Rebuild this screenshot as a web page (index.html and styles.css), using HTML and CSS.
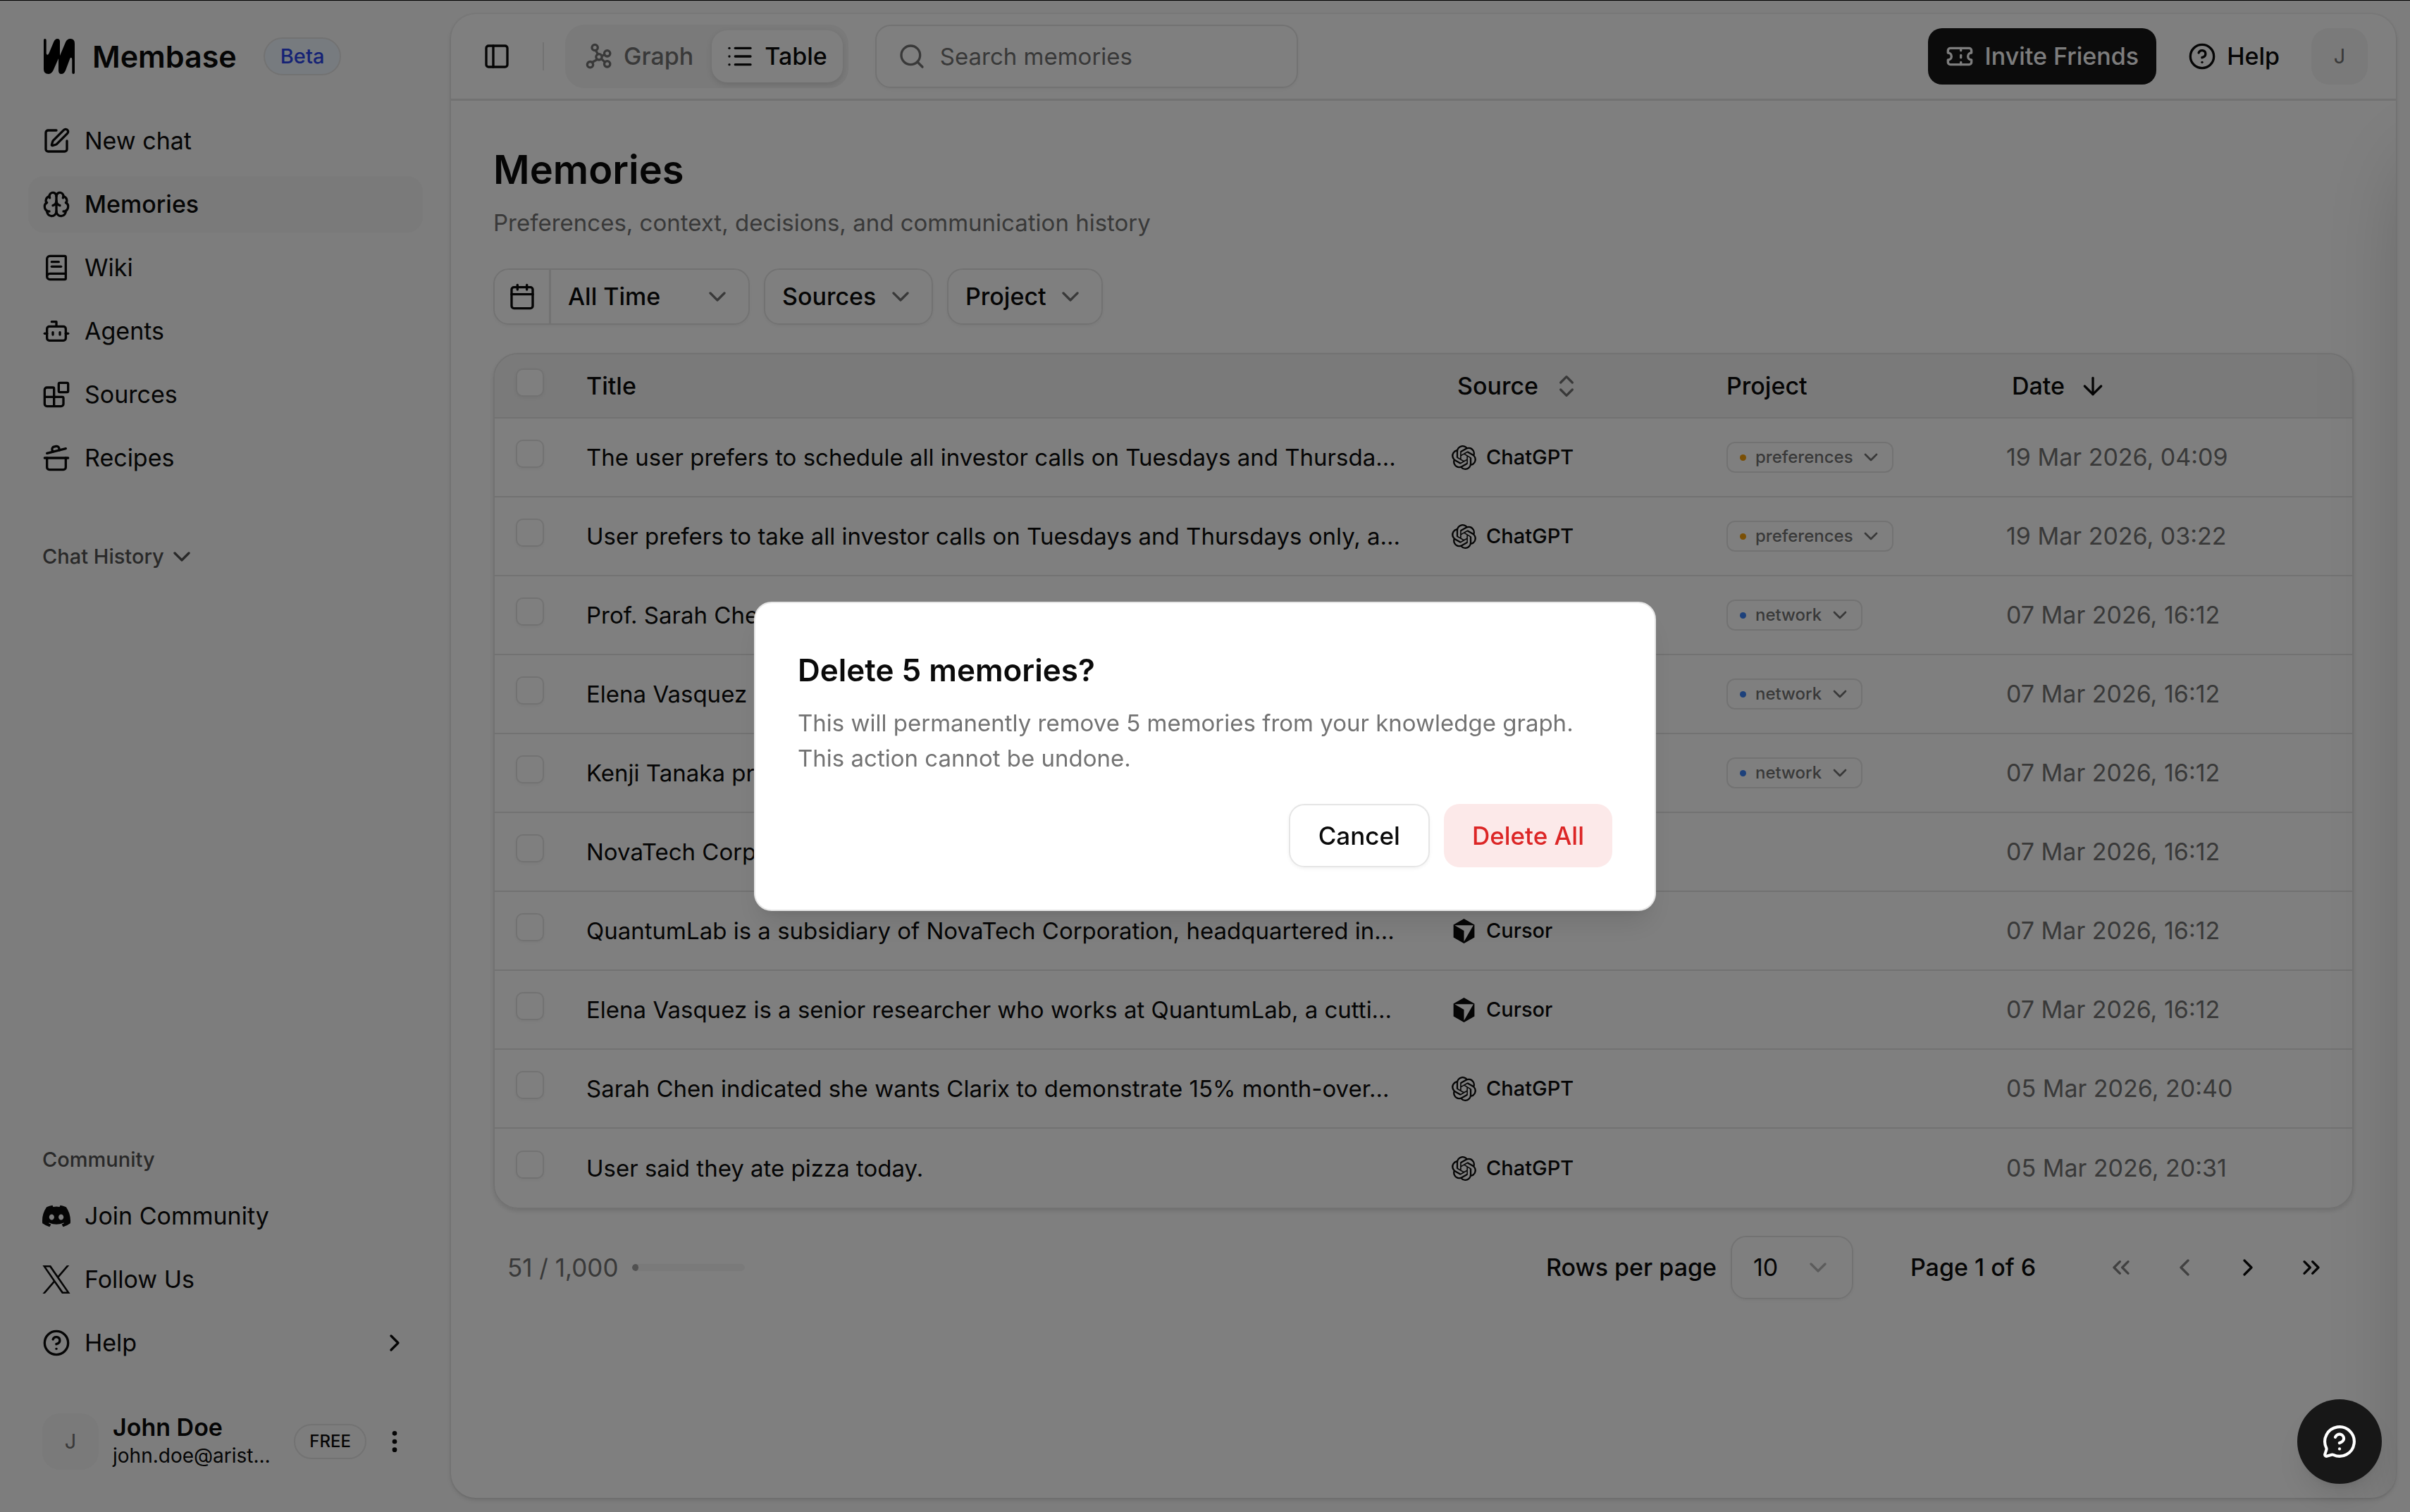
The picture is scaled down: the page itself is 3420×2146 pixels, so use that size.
FILE: index.html
```html
<!DOCTYPE html>
<html lang="en">
<head>
    <meta charset="UTF-8">
    <meta name="viewport" content="width=device-width, initial-scale=1.0">
    <title>Memories - Membase</title>
    <link rel="stylesheet" href="styles.css">
</head>
<body>
    <!-- icon set -->
    <svg class="sprite" aria-hidden="true">
        <symbol id="i-edit" viewBox="0 0 24 24"><path d="M12 3H5a2 2 0 0 0-2 2v14a2 2 0 0 0 2 2h14a2 2 0 0 0 2-2v-7"/><path d="M18.375 2.625a1 1 0 0 1 3 3l-9.013 9.014a2 2 0 0 1-.853.505l-2.873.84a.5.5 0 0 1-.62-.62l.84-2.873a2 2 0 0 1 .506-.852z"/></symbol>
        <symbol id="i-brain" viewBox="0 0 24 24"><path d="M12 18V5"/><path d="M15 13a4.17 4.17 0 0 1-3-4 4.17 4.17 0 0 1-3 4"/><path d="M17.598 6.5A3 3 0 1 0 12 5a3 3 0 1 0-5.598 1.5"/><path d="M17.997 5.125a4 4 0 0 1 2.526 5.77"/><path d="M18 18a4 4 0 0 0 2-7.464"/><path d="M19.967 17.483A4 4 0 1 1 12 18a4 4 0 1 1-7.967-.517"/><path d="M6 18a4 4 0 0 1-2-7.464"/><path d="M6.003 5.125a4 4 0 0 0-2.526 5.77"/></symbol>
        <symbol id="i-book" viewBox="0 0 24 24"><path d="M4 19.5v-15A2.5 2.5 0 0 1 6.5 2H19a1 1 0 0 1 1 1v18a1 1 0 0 1-1 1H6.5a1 1 0 0 1 0-5H20"/><path d="M8 11h8"/><path d="M8 7h6"/></symbol>
        <symbol id="i-bot" viewBox="0 0 24 24"><path d="M12 8V4H8"/><rect width="16" height="12" x="4" y="8" rx="2"/><path d="M2 14h2"/><path d="M20 14h2"/><path d="M15 13v2"/><path d="M9 13v2"/></symbol>
        <symbol id="i-blocks" viewBox="0 0 24 24"><path d="M10 22V7a1 1 0 0 0-1-1H4a2 2 0 0 0-2 2v12a2 2 0 0 0 2 2h12a2 2 0 0 0 2-2v-5a1 1 0 0 0-1-1H2"/><rect x="14" y="2" width="8" height="8" rx="1"/></symbol>
        <symbol id="i-pot" viewBox="0 0 24 24"><path d="M2 12h20"/><path d="M20 12v8a2 2 0 0 1-2 2H6a2 2 0 0 1-2-2v-8"/><path d="m4 8 16-4"/><path d="m8.86 6.78-.45-1.81a2 2 0 0 1 1.45-2.43l1.94-.48a2 2 0 0 1 2.43 1.46l.45 1.8"/></symbol>
        <symbol id="i-down" viewBox="0 0 24 24"><path d="m6 9 6 6 6-6"/></symbol>
        <symbol id="i-right" viewBox="0 0 24 24"><path d="m9 18 6-6-6-6"/></symbol>
        <symbol id="i-left" viewBox="0 0 24 24"><path d="m15 18-6-6 6-6"/></symbol>
        <symbol id="i-first" viewBox="0 0 24 24"><path d="m11 17-5-5 5-5"/><path d="m18 17-5-5 5-5"/></symbol>
        <symbol id="i-last" viewBox="0 0 24 24"><path d="m6 17 5-5-5-5"/><path d="m13 17 5-5-5-5"/></symbol>
        <symbol id="i-sort" viewBox="0 0 24 24"><path d="m7 15 5 5 5-5"/><path d="m7 9 5-5 5 5"/></symbol>
        <symbol id="i-arrow-down" viewBox="0 0 24 24"><path d="M12 5v14"/><path d="m19 12-7 7-7-7"/></symbol>
        <symbol id="i-help" viewBox="0 0 24 24"><circle cx="12" cy="12" r="10"/><path d="M9.09 9a3 3 0 0 1 5.83 1c0 2-3 3-3 3"/><path d="M12 17h.01"/></symbol>
        <symbol id="i-dots" viewBox="0 0 24 24"><circle cx="12" cy="12" r="1"/><circle cx="12" cy="5" r="1"/><circle cx="12" cy="19" r="1"/></symbol>
        <symbol id="i-panel" viewBox="0 0 24 24"><rect width="18" height="18" x="3" y="3" rx="2"/><path d="M9 3v18"/></symbol>
        <symbol id="i-graph" viewBox="0 0 24 24"><circle cx="8.5" cy="4.5" r="2.5"/><circle cx="19" cy="9.5" r="2.5"/><circle cx="12" cy="12.5" r="2.5"/><circle cx="4.5" cy="19" r="2.5"/><circle cx="19" cy="18.5" r="2.5"/><path d="m9.3 6.9 1.8 3.2M14.4 11.6l2.3-1M10.6 14.6l-4.5 2.5M14 14l3 2.9"/></symbol>
        <symbol id="i-list" viewBox="0 0 24 24"><path d="M3 5h.01"/><path d="M3 12h.01"/><path d="M3 19h.01"/><path d="M8 5h13"/><path d="M8 12h13"/><path d="M8 19h13"/></symbol>
        <symbol id="i-search" viewBox="0 0 24 24"><path d="m21 21-4.34-4.34"/><circle cx="11" cy="11" r="8"/></symbol>
        <symbol id="i-ticket" viewBox="0 0 24 24"><path d="M2 9a3 3 0 0 1 0 6v2a2 2 0 0 0 2 2h16a2 2 0 0 0 2-2v-2a3 3 0 0 1 0-6V7a2 2 0 0 0-2-2H4a2 2 0 0 0-2 2Z"/><path d="M13 5v2"/><path d="M13 17v2"/><path d="M13 11v2"/></symbol>
        <symbol id="i-calendar" viewBox="0 0 24 24"><path d="M8 2v4"/><path d="M16 2v4"/><rect width="18" height="18" x="3" y="4" rx="2"/><path d="M3 10h18"/></symbol>
        <symbol id="i-chat-help" viewBox="0 0 24 24"><path d="M2.992 16.342a2 2 0 0 1 .094 1.167l-1.065 3.29a1 1 0 0 0 1.236 1.168l3.413-.998a2 2 0 0 1 1.099.092 10 10 0 1 0-4.777-4.719"/><path d="M9.09 9a3 3 0 0 1 5.83 1c0 2-3 3-3 3"/><path d="M12 17h.01"/></symbol>
        <symbol id="i-discord" viewBox="0 0 24 24"><path d="M20.317 4.37a19.791 19.791 0 0 0-4.885-1.515.074.074 0 0 0-.079.037c-.21.375-.444.864-.608 1.25a18.27 18.27 0 0 0-5.487 0 12.64 12.64 0 0 0-.617-1.25.077.077 0 0 0-.079-.037A19.736 19.736 0 0 0 3.677 4.37a.07.07 0 0 0-.032.027C.533 9.046-.32 13.58.099 18.057a.082.082 0 0 0 .031.057 19.9 19.9 0 0 0 5.993 3.03.078.078 0 0 0 .084-.028 14.09 14.09 0 0 0 1.226-1.994.076.076 0 0 0-.041-.106 13.107 13.107 0 0 1-1.872-.892.077.077 0 0 1-.008-.128 10.2 10.2 0 0 0 .372-.292.074.074 0 0 1 .077-.01c3.928 1.793 8.18 1.793 12.062 0a.074.074 0 0 1 .078.01c.12.098.246.198.373.292a.077.077 0 0 1-.006.127 12.299 12.299 0 0 1-1.873.892.077.077 0 0 0-.041.107c.36.698.772 1.362 1.225 1.993a.076.076 0 0 0 .084.028 19.839 19.839 0 0 0 6.002-3.03.077.077 0 0 0 .032-.054c.5-5.177-.838-9.674-3.549-13.66a.061.061 0 0 0-.031-.03zM8.02 15.33c-1.183 0-2.157-1.085-2.157-2.419 0-1.333.956-2.419 2.157-2.419 1.21 0 2.176 1.096 2.157 2.42 0 1.333-.956 2.418-2.157 2.418zm7.975 0c-1.183 0-2.157-1.085-2.157-2.419 0-1.333.955-2.419 2.157-2.419 1.21 0 2.176 1.096 2.157 2.42 0 1.333-.946 2.418-2.157 2.418z"/></symbol>
        <symbol id="i-x" viewBox="0 0 24 24"><path d="M14.234 10.162 22.977 0h-2.072l-7.591 8.824L7.251 0H.258l9.168 13.343L.258 24H2.33l8.016-9.318L16.749 24h6.993zm-2.837 3.299-.929-1.329L3.076 1.56h3.182l5.965 8.532.929 1.329 7.754 11.09h-3.182z"/></symbol>
        <symbol id="i-openai" viewBox="0 0 24 24"><path d="M22.2819 9.8211a5.9847 5.9847 0 0 0-.5157-4.9108 6.0462 6.0462 0 0 0-6.5098-2.9A6.0651 6.0651 0 0 0 4.9807 4.1818a5.9847 5.9847 0 0 0-3.9977 2.9 6.0462 6.0462 0 0 0 .7427 7.0966 5.98 5.98 0 0 0 .511 4.9107 6.051 6.051 0 0 0 6.5146 2.9001A5.9847 5.9847 0 0 0 13.2599 24a6.0557 6.0557 0 0 0 5.7718-4.2058 5.9894 5.9894 0 0 0 3.9977-2.9001 6.0557 6.0557 0 0 0-.7475-7.0729zm-9.022 12.6081a4.4755 4.4755 0 0 1-2.8764-1.0408l.1419-.0804 4.7783-2.7582a.7948.7948 0 0 0 .3927-.6813v-6.7369l2.02 1.1686a.071.071 0 0 1 .038.052v5.5826a4.504 4.504 0 0 1-4.4945 4.4944zm-9.6607-4.1254a4.4708 4.4708 0 0 1-.5346-3.0137l.142.0852 4.783 2.7582a.7712.7712 0 0 0 .7806 0l5.8428-3.3685v2.3324a.0804.0804 0 0 1-.0332.0615L9.74 19.9502a4.4992 4.4992 0 0 1-6.1408-1.6464zM2.3408 7.8956a4.485 4.485 0 0 1 2.3655-1.9728V11.6a.7664.7664 0 0 0 .3879.6765l5.8144 3.3543-2.0201 1.1685a.0757.0757 0 0 1-.071 0l-4.8303-2.7865A4.504 4.504 0 0 1 2.3408 7.872zm16.5963 3.8558L13.1038 8.364 15.1192 7.2a.0757.0757 0 0 1 .071 0l4.8303 2.7913a4.4944 4.4944 0 0 1-.6765 8.1042v-5.6772a.79.79 0 0 0-.407-.667zm2.0107-3.0231l-.142-.0852-4.7735-2.7818a.7759.7759 0 0 0-.7854 0L9.409 9.2297V6.8974a.0662.0662 0 0 1 .0284-.0615l4.8303-2.7866a4.4992 4.4992 0 0 1 6.6802 4.66zM8.3065 12.863l-2.02-1.1638a.0804.0804 0 0 1-.038-.0567V6.0742a4.4992 4.4992 0 0 1 7.3757-3.4537l-.142.0805L8.704 5.459a.7948.7948 0 0 0-.3927.6813zm1.0976-2.3654l2.602-1.4998 2.6069 1.4998v2.9994l-2.5974 1.4997-2.6067-1.4997Z"/></symbol>
        <symbol id="i-cursor" viewBox="0 0 24 24"><path d="M12 0 22.2 5.9v12.2L12 24 1.8 18.1V5.9zM2.9 6.3 12 11.6V22.2L21.2 6.3z"/></symbol>
    </svg>

    <div class="app">
        <aside class="sidebar">
            <div class="brand">
                <svg class="logo" viewBox="0 0 44 50"><path d="M0 2Q0 0 1.8 0 3.7 0 3.7 2V20C3.8 23.5 6 23.5 7.3 21L14 5Q16 0 19.5 0 23 0 23 4V24L31 5Q33.200 0 38 0 44 0 44 7V48Q44 50 42.200 50 40.300 50 40.300 48V30C40.300 26 38 26 37 29L31 45Q29 50 25 50 21 50 21 45V28L13.500 45Q11 50 6.500 50 0 50 0 43Z"/></svg>
                <span class="brand-name">Membase</span>
                <span class="beta">Beta</span>
            </div>
            <nav class="nav">
                <a href="#"><svg class="icon"><use href="#i-edit"/></svg>New chat</a>
                <a href="#" class="active"><svg class="icon"><use href="#i-brain"/></svg>Memories</a>
                <a href="#"><svg class="icon"><use href="#i-book"/></svg>Wiki</a>
                <a href="#"><svg class="icon"><use href="#i-bot"/></svg>Agents</a>
                <a href="#"><svg class="icon"><use href="#i-blocks"/></svg>Sources</a>
                <a href="#"><svg class="icon"><use href="#i-pot"/></svg>Recipes</a>
            </nav>
            <button class="group-label history">Chat History<svg class="icon"><use href="#i-down"/></svg></button>

            <div class="sidebar-bottom">
                <div class="group-label">Community</div>
                <nav class="nav">
                    <a href="#"><svg class="icon solid"><use href="#i-discord"/></svg>Join Community</a>
                    <a href="#"><svg class="icon solid"><use href="#i-x"/></svg>Follow Us</a>
                    <a href="#"><svg class="icon"><use href="#i-help"/></svg>Help<svg class="icon push"><use href="#i-right"/></svg></a>
                </nav>
                <div class="user">
                    <span class="avatar">J</span>
                    <div class="user-info">
                        <div class="user-name">John Doe</div>
                        <div class="user-mail">john.doe@arist…</div>
                    </div>
                    <span class="plan">FREE</span>
                    <button class="plain" aria-label="Account menu"><svg class="icon"><use href="#i-dots"/></svg></button>
                </div>
            </div>
        </aside>

        <main class="panel">
            <header class="topbar">
                <button class="plain" aria-label="Toggle sidebar"><svg class="icon"><use href="#i-panel"/></svg></button>
                <span class="separator"></span>
                <div class="segmented">
                    <button><svg class="icon"><use href="#i-graph"/></svg>Graph</button>
                    <button class="active"><svg class="icon"><use href="#i-list"/></svg>Table</button>
                </div>
                <label class="search">
                    <svg class="icon"><use href="#i-search"/></svg>
                    <input type="search" placeholder="Search memories" aria-label="Search memories">
                </label>
                <div class="topbar-right">
                    <button class="invite"><svg class="icon"><use href="#i-ticket"/></svg>Invite Friends</button>
                    <button class="help"><svg class="icon"><use href="#i-help"/></svg>Help</button>
                    <span class="avatar">J</span>
                </div>
            </header>

            <div class="content">
                <h1>Memories</h1>
                <p class="subtitle">Preferences, context, decisions, and communication history</p>

                <div class="filters">
                    <div class="range">
                        <button class="range-button" aria-label="Pick dates"><svg class="icon"><use href="#i-calendar"/></svg></button>
                        <span class="select range-select">
                            <select aria-label="Time range"><option>All Time</option></select>
                            <svg class="icon"><use href="#i-down"/></svg>
                        </span>
                    </div>
                    <span class="select boxed">
                        <select aria-label="Sources"><option>Sources</option></select>
                        <svg class="icon"><use href="#i-down"/></svg>
                    </span>
                    <span class="select boxed">
                        <select aria-label="Project"><option>Project</option></select>
                        <svg class="icon"><use href="#i-down"/></svg>
                    </span>
                </div>

                <div class="table-wrap">
                    <table>
                        <colgroup>
                            <col class="col-check">
                            <col>
                            <col class="col-source">
                            <col class="col-project">
                            <col class="col-date">
                        </colgroup>
                        <thead>
                            <tr>
                                <th class="check"><input type="checkbox" aria-label="Select all"></th>
                                <th>Title</th>
                                <th><button class="sort">Source<svg class="icon muted"><use href="#i-sort"/></svg></button></th>
                                <th>Project</th>
                                <th><button class="sort">Date<svg class="icon"><use href="#i-arrow-down"/></svg></button></th>
                            </tr>
                        </thead>
                        <tbody>
                            <tr>
                                <td class="check"><input type="checkbox" aria-label="Select memory"></td>
                                <td class="title">The user prefers to schedule all investor calls on Tuesdays and Thursda…</td>
                                <td><span class="source"><svg class="icon solid"><use href="#i-openai"/></svg>ChatGPT</span></td>
                                <td><span class="select tag amber"><select aria-label="Memory project"><option>preferences</option></select><svg class="icon"><use href="#i-down"/></svg></span></td>
                                <td class="date">19 Mar 2026, 04:09</td>
                            </tr>
                            <tr>
                                <td class="check"><input type="checkbox" aria-label="Select memory"></td>
                                <td class="title">User prefers to take all investor calls on Tuesdays and Thursdays only, a…</td>
                                <td><span class="source"><svg class="icon solid"><use href="#i-openai"/></svg>ChatGPT</span></td>
                                <td><span class="select tag amber"><select aria-label="Memory project"><option>preferences</option></select><svg class="icon"><use href="#i-down"/></svg></span></td>
                                <td class="date">19 Mar 2026, 03:22</td>
                            </tr>
                            <tr>
                                <td class="check"><input type="checkbox" aria-label="Select memory"></td>
                                <td class="title">Prof. Sarah Chen</td>
                                <td></td>
                                <td><span class="select tag blue"><select aria-label="Memory project"><option>network</option></select><svg class="icon"><use href="#i-down"/></svg></span></td>
                                <td class="date">07 Mar 2026, 16:12</td>
                            </tr>
                            <tr>
                                <td class="check"><input type="checkbox" aria-label="Select memory"></td>
                                <td class="title">Elena Vasquez</td>
                                <td></td>
                                <td><span class="select tag blue"><select aria-label="Memory project"><option>network</option></select><svg class="icon"><use href="#i-down"/></svg></span></td>
                                <td class="date">07 Mar 2026, 16:12</td>
                            </tr>
                            <tr>
                                <td class="check"><input type="checkbox" aria-label="Select memory"></td>
                                <td class="title">Kenji Tanaka prefers</td>
                                <td></td>
                                <td><span class="select tag blue"><select aria-label="Memory project"><option>network</option></select><svg class="icon"><use href="#i-down"/></svg></span></td>
                                <td class="date">07 Mar 2026, 16:12</td>
                            </tr>
                            <tr>
                                <td class="check"><input type="checkbox" aria-label="Select memory"></td>
                                <td class="title">NovaTech Corporation</td>
                                <td></td>
                                <td></td>
                                <td class="date">07 Mar 2026, 16:12</td>
                            </tr>
                            <tr>
                                <td class="check"><input type="checkbox" aria-label="Select memory"></td>
                                <td class="title">QuantumLab is a subsidiary of NovaTech Corporation, headquartered in…</td>
                                <td><span class="source"><svg class="icon cube"><use href="#i-cursor"/></svg>Cursor</span></td>
                                <td></td>
                                <td class="date">07 Mar 2026, 16:12</td>
                            </tr>
                            <tr>
                                <td class="check"><input type="checkbox" aria-label="Select memory"></td>
                                <td class="title">Elena Vasquez is a senior researcher who works at QuantumLab, a cutti…</td>
                                <td><span class="source"><svg class="icon cube"><use href="#i-cursor"/></svg>Cursor</span></td>
                                <td></td>
                                <td class="date">07 Mar 2026, 16:12</td>
                            </tr>
                            <tr>
                                <td class="check"><input type="checkbox" aria-label="Select memory"></td>
                                <td class="title">Sarah Chen indicated she wants Clarix to demonstrate 15% month-over…</td>
                                <td><span class="source"><svg class="icon solid"><use href="#i-openai"/></svg>ChatGPT</span></td>
                                <td></td>
                                <td class="date">05 Mar 2026, 20:40</td>
                            </tr>
                            <tr>
                                <td class="check"><input type="checkbox" aria-label="Select memory"></td>
                                <td class="title">User said they ate pizza today.</td>
                                <td><span class="source"><svg class="icon solid"><use href="#i-openai"/></svg>ChatGPT</span></td>
                                <td></td>
                                <td class="date">05 Mar 2026, 20:31</td>
                            </tr>
                        </tbody>
                    </table>
                </div>

                <div class="table-footer">
                    <div class="usage">
                        <span>51 / 1,000</span>
                        <span class="bar"><span class="bar-fill" style="width: 5.1%"></span></span>
                    </div>
                    <div class="pager">
                        <label for="rows">Rows per page</label>
                        <span class="select rows">
                            <select id="rows"><option>10</option></select>
                            <svg class="icon"><use href="#i-down"/></svg>
                        </span>
                        <span class="page">Page 1 of 6</span>
                        <div class="pager-buttons">
                            <button disabled aria-label="First page"><svg class="icon"><use href="#i-first"/></svg></button>
                            <button disabled aria-label="Previous page"><svg class="icon"><use href="#i-left"/></svg></button>
                            <button aria-label="Next page"><svg class="icon"><use href="#i-right"/></svg></button>
                            <button aria-label="Last page"><svg class="icon"><use href="#i-last"/></svg></button>
                        </div>
                    </div>
                </div>
            </div>
            <!-- closed detail drawer, only its shadow shows -->
            <div class="drawer-clip"><div class="drawer"></div></div>
        </main>
    </div>

    <div class="overlay">
        <div class="dialog" role="alertdialog" aria-modal="true" aria-labelledby="dialog-title" aria-describedby="dialog-text">
            <h2 id="dialog-title">Delete 5 memories?</h2>
            <p id="dialog-text">This will permanently remove 5 memories from your knowledge graph. This action cannot be undone.</p>
            <div class="dialog-actions">
                <button class="cancel">Cancel</button>
                <button class="delete">Delete All</button>
            </div>
        </div>
    </div>

    <button class="fab" aria-label="Support chat"><svg class="icon"><use href="#i-chat-help"/></svg></button>
</body>
</html>
```
FILE: styles.css
```css
:root {
    --bg: #fafafa;
    --panel: #ffffff;
    --muted-bg: #f4f4f4;
    --text: #0a0a0a;
    --text-muted: #737373;
    --border: #e5e5e5;
    --danger: #dc2626;
    --fs-base: 33px;
    --fs-medium: 34px;
    --fs-small: 29px;
    --fs-tiny: 24px;
    --radius: 22px;
    --shadow: 0 2px 5px rgba(0, 0, 0, 0.05);
}

* {
    box-sizing: border-box;
}

body {
    margin: 0;
    font-family: Inter, "Liberation Sans", sans-serif;
    font-size: var(--fs-base);
    line-height: 50px;
    color: var(--text);
    background-color: var(--bg);
}

button, input, select {
    font: inherit;
    color: inherit;
    margin: 0;
}

button {
    display: flex;
    align-items: center;
    border: none;
    background: none;
    padding: 0;
    cursor: pointer;
}

h1, h2, p {
    margin: 0;
}

.sprite {
    position: absolute;
    width: 0;
    height: 0;
}

.icon {
    width: 40px;
    height: 40px;
    flex: none;
    fill: none;
    stroke: currentColor;
    stroke-width: 2;
    stroke-linecap: round;
    stroke-linejoin: round;
}
.icon.solid, .icon.cube {
    fill: currentColor;
    stroke: none;
}
.icon.cube {
    fill-rule: evenodd;
}
.icon.muted {
    color: var(--text-muted);
}

.app {
    display: flex;
    min-height: 100vh;
}

/* sidebar */
.sidebar {
    width: 640px;
    flex: none;
    padding: 40px 40px 60px;
    display: flex;
    flex-direction: column;
}
.brand {
    display: flex;
    align-items: center;
    height: 80px;
    padding-left: 22px;
    margin-bottom: 40px;
}
.logo {
    width: 44px;
    height: 50px;
    margin-right: 25px;
}
.brand-name {
    font-size: 43px;
    font-weight: 600;
}
.beta {
    margin-left: 38px;
    padding: 0 22px;
    border: 2px solid var(--border);
    border-radius: 27px;
    font-size: var(--fs-small);
    font-weight: 500;
    color: #2b45ea;
    background-color: #eff6ff;
}
.nav {
    display: flex;
    flex-direction: column;
    gap: 10px;
    font-size: var(--fs-medium);
}
.nav a {
    display: flex;
    align-items: center;
    gap: 20px;
    height: 80px;
    padding: 0 20px;
    border-radius: var(--radius);
    color: inherit;
    text-decoration: none;
}
.nav a.active {
    background-color: var(--muted-bg);
    font-weight: 500;
}
.push {
    margin-left: auto;
}
.group-label {
    display: flex;
    align-items: center;
    gap: 5px;
    height: 80px;
    padding-left: 20px;
    font-size: var(--fs-small);
    font-weight: 500;
    color: #525252;
}
.history {
    margin-top: 60px;
}
.sidebar-bottom {
    margin-top: auto;
}
.user {
    display: flex;
    align-items: center;
    gap: 20px;
    margin-top: 60px;
    padding: 0 20px;
}
.avatar {
    display: flex;
    align-items: center;
    justify-content: center;
    width: 80px;
    height: 80px;
    border-radius: 25px;
    font-size: var(--fs-small);
    color: var(--text-muted);
    background-color: var(--muted-bg);
}
.user-info {
    flex: 1;
    line-height: 40px;
}
.user-name {
    font-size: var(--fs-medium);
    font-weight: 600;
}
.user-mail {
    font-size: 28px;
}
.plan {
    padding: 0 20px;
    border: 2px solid var(--border);
    border-radius: 25px;
    font-size: var(--fs-tiny);
    font-weight: 500;
    line-height: 46px;
}

/* main panel */
.panel {
    position: relative;
    flex: 1;
    margin: 20px 20px 20px 0;
    border-radius: 35px;
    background-color: var(--panel);
    box-shadow: 0 0 0 2px rgba(0, 0, 0, 0.03), 0 3px 6px rgba(0, 0, 0, 0.12);
}
.topbar {
    display: flex;
    align-items: center;
    height: 123px;
    padding: 0 40px 0 45px;
    border-bottom: 3px solid var(--border);
}
.separator {
    width: 2px;
    height: 40px;
    margin: 0 30px 0 45px;
    background-color: var(--border);
}
.segmented {
    display: flex;
    gap: 4px;
    padding: 8px;
    border-radius: 27px;
    background-color: var(--muted-bg);
    margin-right: 38px;
}
.segmented button {
    gap: 15px;
    height: 74px;
    padding: 0 22px 0 20px;
    border-radius: var(--radius);
    font-size: var(--fs-medium);
    font-weight: 500;
    color: var(--text-muted);
}
.segmented .active {
    color: var(--text);
    background-color: var(--panel);
    box-shadow: 0 3px 8px rgba(0, 0, 0, 0.12);
}
.search {
    display: flex;
    align-items: center;
    gap: 20px;
    width: 600px;
    height: 90px;
    padding: 0 30px;
    border: 2px solid var(--border);
    border-radius: var(--radius);
    box-shadow: var(--shadow);
    color: var(--text-muted);
}
.search input {
    flex: 1;
    min-width: 0;
    border: none;
    outline: none;
    padding: 0;
    background: none;
}
.search input::placeholder {
    color: var(--text-muted);
}
.topbar-right {
    display: flex;
    align-items: center;
    gap: 20px;
    margin-left: auto;
    font-size: var(--fs-medium);
    font-weight: 500;
}
.topbar-right .avatar {
    font-weight: 400;
}
.invite, .help {
    gap: 15px;
    height: 80px;
    padding: 0 25px;
    border-radius: 20px;
}
.invite {
    color: var(--bg);
    background-color: #171717;
}

.content {
    padding: 58px 60px;
}
h1 {
    font-size: 56px;
    font-weight: 600;
    line-height: 80px;
}
.subtitle {
    margin-top: 10px;
    color: var(--text-muted);
}

/* filters */
.filters {
    display: flex;
    gap: 20px;
    margin: 40px 0;
}
.select {
    position: relative;
    display: inline-flex;
    align-items: center;
    font-size: var(--fs-medium);
    font-weight: 500;
}
.select select {
    appearance: none;
    border: none;
    outline: none;
    background: none;
    width: 100%;
    height: 76px;
    padding: 0 78px 0 24px;
}
.select .icon {
    position: absolute;
    right: 24px;
    color: var(--text-muted);
    pointer-events: none;
}
.range, .boxed {
    border: 2px solid var(--border);
    border-radius: var(--radius);
    box-shadow: var(--shadow);
}
.range {
    display: flex;
}
.range-button {
    width: 80px;
    justify-content: center;
    border-right: 3px solid var(--border);
}
.range-select {
    width: 280px;
}

/* table */
.table-wrap {
    border: 2px solid var(--border);
    border-radius: 35px;
    overflow: hidden;
    box-shadow: 0 3px 6px rgba(0, 0, 0, 0.12);
}
table {
    width: 100%;
    table-layout: fixed;
    border-collapse: separate;
    border-spacing: 0;
}
.col-check {
    width: 110px;
}
.col-source {
    width: 390px;
}
.col-project {
    width: 397px;
}
.col-date {
    width: 511px;
}
th, td {
    height: 112px;
    padding: 0 20px;
    text-align: left;
    border-bottom: 2px solid var(--border);
    white-space: nowrap;
}
th {
    height: 91px;
    font-size: var(--fs-medium);
    font-weight: 500;
    background-color: var(--muted-bg);
}
tbody tr:last-child td {
    border-bottom: none;
}
.check {
    padding: 0 0 10px 30px;
}
.check input {
    display: block;
    appearance: none;
    width: 40px;
    height: 40px;
    border: 2px solid var(--border);
    border-radius: 10px;
    background-color: var(--panel);
    box-shadow: var(--shadow);
}
.sort {
    gap: 20px;
    padding-left: 8px;
}
.source {
    display: flex;
    align-items: center;
    gap: 14px;
    font-size: var(--fs-small);
    font-weight: 500;
}
.source .icon {
    width: 35px;
    height: 35px;
}
.date {
    font-size: var(--fs-medium);
    color: var(--text-muted);
}
.tag {
    display: flex;
    width: fit-content;
    border: 2px solid var(--border);
    border-radius: 12px;
    font-size: var(--fs-tiny);
    color: var(--text-muted);
}
.tag::before {
    content: "";
    position: absolute;
    left: 17px;
    width: 9px;
    height: 9px;
    border-radius: 50%;
}
.tag.amber::before {
    background-color: #f59e0b;
}
.tag.blue::before {
    background-color: #3b82f6;
}
.tag select {
    height: 40px;
    padding: 0 55px 0 39px;
    line-height: 40px;
}
.tag .icon {
    right: 14px;
    width: 32px;
    height: 32px;
}

.table-footer {
    display: flex;
    align-items: center;
    justify-content: space-between;
    margin-top: 38px;
    padding: 0 20px;
}
.usage {
    display: flex;
    align-items: center;
    gap: 20px;
    font-size: 35px;
    color: var(--text-muted);
}
.bar {
    width: 160px;
    height: 10px;
    border-radius: 5px;
    background-color: var(--muted-bg);
    overflow: hidden;
}
.bar-fill {
    display: block;
    height: 100%;
    border-radius: 5px;
    background-color: #a3a3a3;
}
.pager {
    display: flex;
    align-items: center;
    font-size: var(--fs-medium);
    font-weight: 500;
}
.rows {
    width: 174px;
    margin-left: 20px;
    border: 2px solid var(--border);
    border-radius: var(--radius);
    box-shadow: var(--shadow);
    font-weight: 400;
}
.rows select {
    height: 86px;
    padding: 0 60px 0 30px;
}
.rows .icon {
    opacity: 0.5;
    right: 28px;
}
.page {
    min-width: 250px;
    margin: 0 45px;
    text-align: center;
}
.pager-buttons {
    display: flex;
    gap: 10px;
}
.pager-buttons button {
    width: 80px;
    height: 80px;
    justify-content: center;
}
.pager-buttons button:disabled {
    opacity: 0.5;
}

.drawer-clip {
    position: absolute;
    inset: 123px 0 0 0;
    overflow: hidden;
    border-radius: 0 0 35px 0;
    pointer-events: none;
}
.drawer {
    position: absolute;
    left: 100%;
    top: 0;
    width: 1000px;
    height: 100%;
    box-shadow: 0 62px 125px -30px rgba(0, 0, 0, 0.25);
}

/* delete dialog */
.overlay {
    position: fixed;
    inset: 0;
    display: flex;
    align-items: center;
    justify-content: center;
    border-top: 1px solid #000;
    background-color: rgba(0, 0, 0, 0.5);
}
.dialog {
    width: 1280px;
    padding: 60px;
    border: 2px solid var(--border);
    border-radius: 25px;
    background-color: var(--panel);
    box-shadow: 0 25px 38px -8px rgba(0, 0, 0, 0.1), 0 10px 15px -10px rgba(0, 0, 0, 0.1);
}
.dialog h2 {
    font-size: 44px;
    font-weight: 600;
    line-height: 70px;
    margin-bottom: 15px;
}
.dialog p {
    color: var(--text-muted);
}
.dialog-actions {
    display: flex;
    justify-content: flex-end;
    gap: 20px;
    margin-top: 40px;
    font-size: 35px;
    font-weight: 500;
}
.dialog-actions button {
    height: 90px;
    padding: 0 40px;
    border-radius: var(--radius);
}
.cancel {
    border: 2px solid var(--border);
    box-shadow: var(--shadow);
}
.delete {
    color: var(--danger);
    background-color: #fce9e9;
}

.fab {
    position: fixed;
    right: 40px;
    bottom: 40px;
    width: 120px;
    height: 120px;
    justify-content: center;
    border-radius: 50%;
    color: #fff;
    background-color: #171717;
    box-shadow: 0 25px 38px -8px rgba(0, 0, 0, 0.1), 0 10px 15px -10px rgba(0, 0, 0, 0.1);
}
.fab .icon {
    width: 50px;
    height: 50px;
}
```
